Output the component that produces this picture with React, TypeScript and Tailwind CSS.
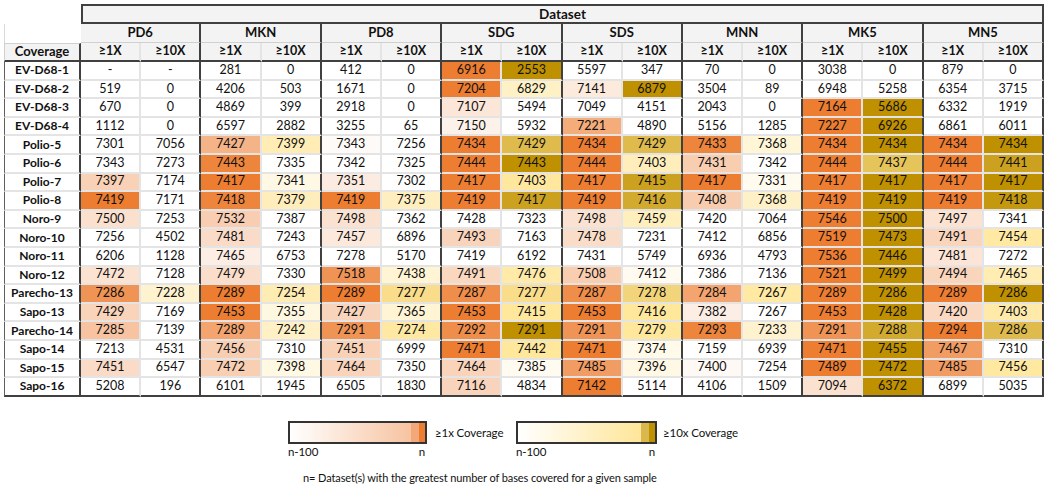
type Row = { name: string; vals: (number | null)[] };

const groups = ['PD6', 'MKN', 'PD8', 'SDG', 'SDS', 'MNN', 'MK5', 'MN5'];

const rows: Row[] = [
  { name: 'EV-D68-1', vals: [null, null, 281, 0, 412, 0, 6916, 2553, 5597, 347, 70, 0, 3038, 0, 879, 0] },
  { name: 'EV-D68-2', vals: [519, 0, 4206, 503, 1671, 0, 7204, 6829, 7141, 6879, 3504, 89, 6948, 5258, 6354, 3715] },
  { name: 'EV-D68-3', vals: [670, 0, 4869, 399, 2918, 0, 7107, 5494, 7049, 4151, 2043, 0, 7164, 5686, 6332, 1919] },
  { name: 'EV-D68-4', vals: [1112, 0, 6597, 2882, 3255, 65, 7150, 5932, 7221, 4890, 5156, 1285, 7227, 6926, 6861, 6011] },
  { name: 'Polio-5', vals: [7301, 7056, 7427, 7399, 7343, 7256, 7434, 7429, 7434, 7429, 7433, 7368, 7434, 7434, 7434, 7434] },
  { name: 'Polio-6', vals: [7343, 7273, 7443, 7335, 7342, 7325, 7444, 7443, 7444, 7403, 7431, 7342, 7444, 7437, 7444, 7441] },
  { name: 'Polio-7', vals: [7397, 7174, 7417, 7341, 7351, 7302, 7417, 7403, 7417, 7415, 7417, 7331, 7417, 7417, 7417, 7417] },
  { name: 'Polio-8', vals: [7419, 7171, 7418, 7379, 7419, 7375, 7419, 7417, 7419, 7416, 7408, 7368, 7419, 7419, 7419, 7418] },
  { name: 'Noro-9', vals: [7500, 7253, 7532, 7387, 7498, 7362, 7428, 7323, 7498, 7459, 7420, 7064, 7546, 7500, 7497, 7341] },
  { name: 'Noro-10', vals: [7256, 4502, 7481, 7243, 7457, 6896, 7493, 7163, 7478, 7231, 7412, 6856, 7519, 7473, 7491, 7454] },
  { name: 'Noro-11', vals: [6206, 1128, 7465, 6753, 7278, 5170, 7419, 6192, 7431, 5749, 6936, 4793, 7536, 7446, 7481, 7272] },
  { name: 'Noro-12', vals: [7472, 7128, 7479, 7330, 7518, 7438, 7491, 7476, 7508, 7412, 7386, 7136, 7521, 7499, 7494, 7465] },
  { name: 'Parecho-13', vals: [7286, 7228, 7289, 7254, 7289, 7277, 7287, 7277, 7287, 7278, 7284, 7267, 7289, 7286, 7289, 7286] },
  { name: 'Sapo-13', vals: [7429, 7169, 7453, 7355, 7427, 7365, 7453, 7415, 7453, 7416, 7382, 7267, 7453, 7428, 7420, 7403] },
  { name: 'Parecho-14', vals: [7285, 7139, 7289, 7242, 7291, 7274, 7292, 7291, 7291, 7279, 7293, 7233, 7291, 7288, 7294, 7286] },
  { name: 'Sapo-14', vals: [7213, 4531, 7456, 7310, 7451, 6999, 7471, 7442, 7471, 7374, 7159, 6939, 7471, 7455, 7467, 7310] },
  { name: 'Sapo-15', vals: [7451, 6547, 7472, 7398, 7464, 7350, 7464, 7385, 7485, 7396, 7400, 7254, 7489, 7472, 7485, 7456] },
  { name: 'Sapo-16', vals: [5208, 196, 6101, 1945, 6505, 1830, 7116, 4834, 7142, 5114, 4106, 1509, 7094, 6372, 6899, 5035] },
];

type RGB = [number, number, number];
const ORANGE_MID: RGB = [248, 203, 173];
const ORANGE_FULL: RGB = [237, 125, 49];
const GOLD_MID: RGB = [255, 230, 153];
const GOLD_FULL: RGB = [191, 144, 0];

function mix(a: RGB, b: RGB, t: number) {
  const c = a.map((v, i) => Math.round(v + (b[i] - v) * t));
  return `rgb(${c[0]},${c[1]},${c[2]})`;
}

// colour scale: n-100 -> white, n-10 -> mid, n -> full
function shade(d: number, mid: RGB, full: RGB) {
  if (d >= 100) return undefined;
  if (d >= 10) return mix([255, 255, 255], mid, (100 - d) / 90);
  return mix(mid, full, (10 - d) / 10);
}

function cellColor(vals: (number | null)[], i: number) {
  const v = vals[i];
  if (v == null) return undefined;
  const same = vals.filter((_, j) => j % 2 === i % 2).map((x) => x ?? 0);
  const max = Math.max(...same);
  return i % 2 === 0 ? shade(max - v, ORANGE_MID, ORANGE_FULL) : shade(max - v, GOLD_MID, GOLD_FULL);
}

export default function App() {
  return (
    <div className="w-[1050px] h-[487px] bg-white text-[#111] font-['Lato','Liberation_Sans',sans-serif] overflow-hidden">
      <div className="pt-[4px] pl-[4px]">
        <div className="w-[1040px] grid grid-cols-[77px_repeat(16,minmax(0,1fr))]">
          {/* Dataset row */}
          <div className="h-[20px]" />
          <div className="col-span-16 h-[20px] bg-[#F3F3F3] border-2 border-[#404040] flex items-center justify-center text-[13.5px] font-bold">
            Dataset
          </div>

          {/* group row */}
          <div className="h-[19px] border-l border-[#D9D9D9]" />
          {groups.map((g) => (
            <div
              key={g}
              className="col-span-2 h-[19px] bg-[#F3F3F3] border-r-2 border-r-[#404040] border-b border-b-[#D0D0D0] flex items-center justify-center text-[13px] font-bold first-of-type:border-l-2"
            >
              {g}
            </div>
          ))}

          {/* sub header row */}
          <div className="h-[19px] bg-[#F3F3F3] border border-[#D0D0D0] border-r-2 border-r-[#404040] border-b-2 border-b-[#404040] flex items-center justify-center text-[13px] font-bold">
            Coverage
          </div>
          {groups.map((g) => [
            <div
              key={g + '1'}
              className="h-[19px] bg-[#F3F3F3] border-b-2 border-b-[#404040] border-r-2 border-r-[#E4E4E4] flex items-center justify-center text-[12.5px] font-bold"
            >
              ≥1X
            </div>,
            <div
              key={g + '10'}
              className="h-[19px] bg-[#F3F3F3] border-b-2 border-b-[#404040] border-r-2 border-r-[#404040] flex items-center justify-center text-[12.5px] font-bold"
            >
              ≥10X
            </div>,
          ])}

          {/* data rows */}
          {rows.map((r, ri) => {
            const last = ri === rows.length - 1;
            return [
              <div
                key={r.name}
                className={`h-[18.6px] border-l border-l-[#606060] border-b-2 border-r-2 border-r-[#404040] flex items-center justify-center text-[12px] font-bold ${
                  last ? 'border-b-[#404040]' : 'border-b-[#E4E4E4]'
                }`}
              >
                {r.name}
              </div>,
              ...r.vals.map((v, i) => (
                <div
                  key={r.name + i}
                  style={{ backgroundColor: cellColor(r.vals, i) }}
                  className={`h-[18.6px] border-b-2 border-r-2 flex items-center justify-center text-[12.5px] ${
                    last ? 'border-b-[#404040]' : 'border-b-[#E4E4E4]'
                  } ${i % 2 === 1 ? 'border-r-[#404040]' : 'border-r-[#E4E4E4]'}`}
                >
                  {v == null ? '-' : v}
                </div>
              )),
            ];
          })}
        </div>
      </div>

      {/* legend */}
      <div className="flex pl-[288px] pt-[24px] text-[11px] tracking-[-0.1px]">
        <div className="w-[228px] flex items-start">
          <div className="flex flex-col">
            <div className="w-[139px] h-[23px] border-2 border-[#333] bg-[linear-gradient(to_right,#ffffff_0%,#F7C3A0_90%,#F2A878_90%,#F2A878_95.5%,#ED7D31_95.5%)]" />
            <div className="flex justify-between leading-[14px] pt-[1px] text-[11.5px]">
              <span>n-100</span>
              <span className="pr-[2px]">n</span>
            </div>
          </div>
          <span className="ml-[8px] leading-[23px] text-[11.5px]">≥1x Coverage</span>
        </div>
        <div className="flex items-start">
          <div className="flex flex-col">
            <div className="w-[141px] h-[23px] border-2 border-[#333] bg-[linear-gradient(to_right,#ffffff_0%,#FFE699_90%,#D9B84D_90%,#D9B84D_95.4%,#BF9000_95.4%)]" />
            <div className="flex justify-between leading-[14px] pt-[1px] text-[11.5px]">
              <span>n-100</span>
              <span className="pr-[2px]">n</span>
            </div>
          </div>
          <span className="ml-[6px] leading-[23px] text-[11.5px]">≥10x Coverage</span>
        </div>
      </div>
      <div className="pl-[303px] pt-[12px] text-[11px] tracking-[-0.1px] leading-[14px]">
        n= Dataset(s) with the greatest number of bases covered for a given sample
      </div>
    </div>
  );
}
